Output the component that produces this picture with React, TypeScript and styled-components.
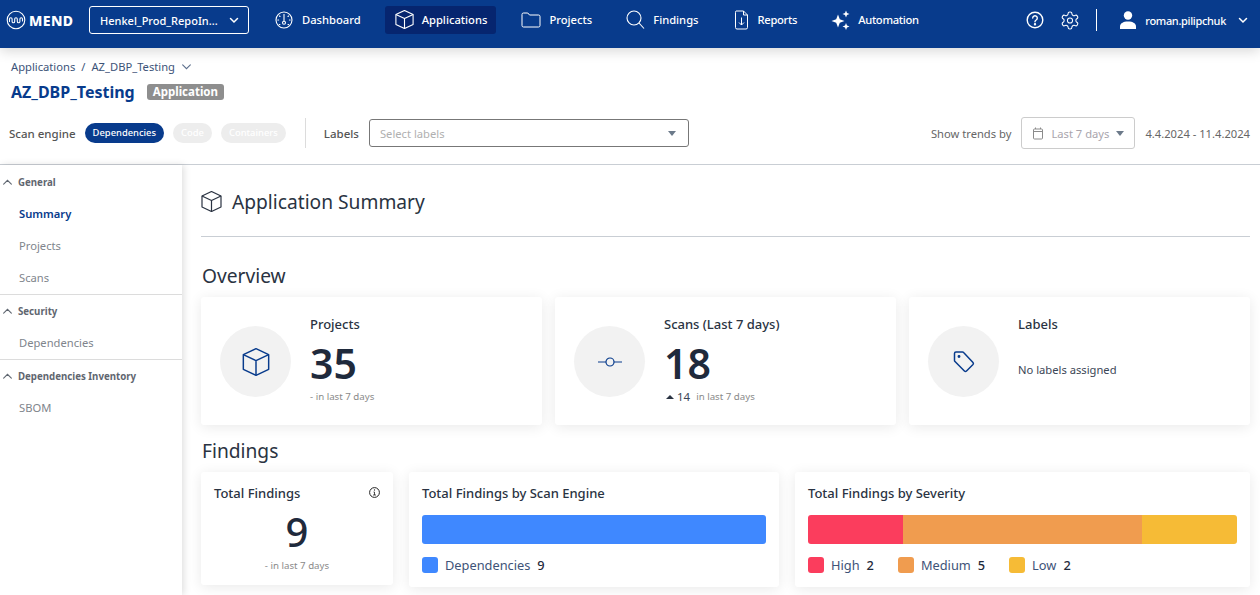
import React from "react";
import styled, { createGlobalStyle } from "styled-components";

const Global = createGlobalStyle`
  html, body { margin: 0; padding: 0; background: #fff; }
  body { font-family: "Noto Sans", "Open Sans", sans-serif; color: #1f2a3c; }
  * { box-sizing: border-box; }
`;

const Page = styled.div`
  width: 1260px;
  height: 595px;
  overflow: hidden;
  display: flex;
  flex-direction: column;
`;

const TopBar = styled.header`
  height: 48px;
  flex: none;
  background: #083b8c;
  display: flex;
  align-items: flex-start;
  padding: 6px 0 0 6px;
  box-shadow: 0 3px 12px rgba(0, 0, 0, 0.16);
  position: relative;
  z-index: 2;
  color: #fff;
`;

const Logo = styled.div`
  display: flex;
  align-items: center;
  gap: 3px;
  width: 83px;
  height: 28px;
  font-size: 14px;
  font-weight: 800;
  letter-spacing: 0.4px;
`;

const OrgSelect = styled.div`
  width: 160px;
  height: 28px;
  flex: none;
  border: 1px solid #fff;
  border-radius: 3px;
  display: flex;
  align-items: center;
  justify-content: space-between;
  padding: 0 9px 0 10px;
  font-size: 11px;
  font-weight: 500;
`;

const Nav = styled.nav`
  display: flex;
  align-items: center;
  margin-left: 16px;
  gap: 15px;
`;

const NavItem = styled.div<{ $active?: boolean }>`
  display: flex;
  align-items: center;
  height: 28px;
  gap: 8px;
  padding: 0 9px 0 10px;
  border-radius: 3px;
  font-size: 11.2px;
  font-weight: 500;
  white-space: nowrap;
  background: ${(p) => (p.$active ? "#06256f" : "transparent")};
  svg { margin-bottom: 1px; }
`;

const NavLabel = styled.span<{ $tight?: boolean }>`
  margin-bottom: 2px;
  letter-spacing: ${(p) => (p.$tight ? "-0.3px" : "0")};
`;

const TopRight = styled.div`
  margin-left: auto;
  display: flex;
  align-items: center;
  height: 28px;
  padding-right: 12px;
`;

const IconSlot = styled.span`
  display: flex;
  margin-right: 17px;
`;

const VDivider = styled.span`
  width: 1px;
  height: 22px;
  background: #fff;
  margin: 0 22px 0 0;
`;

const UserName = styled.span`
  font-size: 11px;
  font-weight: 500;
  letter-spacing: -0.33px;
  margin: 0 12px 0 8px;
`;

const PageHead = styled.section`
  flex: none;
  height: 117px;
  border-bottom: 1px solid #c9ced4;
  padding: 9px 10px 0 9px;
`;

const Crumbs = styled.div`
  display: flex;
  align-items: center;
  height: 18px;
  margin-left: 2px;
  font-size: 11.2px;
  color: #3c5378;
  gap: 6px;
`;

const TitleRow = styled.div`
  display: flex;
  align-items: center;
  gap: 12px;
  margin: 4px 0 0 2px;
  height: 26px;
`;

const Title = styled.h1`
  margin: 0;
  font-size: 16px;
  font-weight: 700;
  color: #083b8c;
`;

const Badge = styled.span`
  background: #8e8e8e;
  color: #fff;
  font-size: 11.5px;
  font-weight: 700;
  line-height: 16px;
  height: 16px;
  padding: 0 6px;
  border-radius: 3px;
`;

const FilterRow = styled.div`
  display: flex;
  align-items: center;
  margin-top: 13px;
  height: 30px;
`;

const FilterLabel = styled.span`
  font-size: 11.5px;
  font-weight: 500;
  color: #555;
`;

const Pill = styled.span<{ $on?: boolean }>`
  height: 20px;
  border-radius: 10px;
  padding: 0 8px;
  font-size: 9.4px;
  font-weight: 500;
  line-height: 20px;
  margin-right: 9px;
  background: ${(p) => (p.$on ? "#083b8c" : "#ededed")};
  color: #fff;
`;

const PillGroup = styled.div`
  display: flex;
  margin-left: 9px;
`;

const FilterDivider = styled.span`
  width: 1px;
  height: 30px;
  background: #dcdcdc;
  margin: 0 18px 0 10px;
`;

const LabelSelect = styled.div`
  width: 320px;
  height: 28px;
  margin-left: 10px;
  border: 1px solid #777;
  border-radius: 3px;
  display: flex;
  align-items: center;
  justify-content: space-between;
  padding: 0 12px 0 10px;
  font-size: 11.2px;
  color: #b0b0b0;
`;

const Caret = styled.span`
  width: 0;
  height: 0;
  border-left: 4px solid transparent;
  border-right: 4px solid transparent;
  border-top: 5px solid #6c7a8a;
`;

const Trends = styled.div`
  margin-left: auto;
  display: flex;
  align-items: center;
  font-size: 11.2px;
  color: #666;
`;

const DateSelect = styled.div`
  width: 114px;
  height: 32px;
  margin: 0 10px;
  border: 1px solid #ccc;
  border-radius: 3px;
  display: flex;
  align-items: center;
  gap: 7px;
  padding: 0 10px;
  color: #a9a5ad;
`;

const Body = styled.div`
  flex: 1;
  display: flex;
  min-height: 0;
`;

const Sidebar = styled.aside`
  width: 182px;
  flex: none;
  padding-top: 1px;
  box-shadow: 2px 0 7px rgba(0, 0, 0, 0.13);
  position: relative;
  background: #fff;
`;

const SideGroup = styled.div`
  border-bottom: 1px solid #dcdcdc;
  &:last-child { border-bottom: 0; }
`;

const SideHead = styled.div`
  height: 32px;
  display: flex;
  align-items: center;
  padding-left: 2px;
  gap: 5px;
  font-size: 9.7px;
  font-weight: 700;
  color: #5f6670;
`;

const SideItem = styled.div<{ $active?: boolean }>`
  height: 32px;
  line-height: 32px;
  padding-left: 19px;
  font-size: 11.2px;
  font-weight: ${(p) => (p.$active ? 600 : 400)};
  color: ${(p) => (p.$active ? "#083b8c" : "#80858c")};
`;

const Main = styled.main`
  flex: 1;
  padding: 0 10px 0 19px;
  min-width: 0;
`;

const SummaryHead = styled.div`
  height: 72px;
  border-bottom: 1px solid #c9ced4;
  display: flex;
  align-items: center;
  gap: 10px;
  font-size: 19.2px;
  color: #2a3342;
  padding-top: 2px;
`;

const Section = styled.h2<{ $top: number }>`
  margin: ${(p) => p.$top}px 0 0 1px;
  font-size: 19.2px;
  font-weight: 400;
  line-height: 26px;
  color: #2a3342;
`;

const CardRow = styled.div`
  display: flex;
  gap: 13px;
  margin-top: 8px;
`;

const Card = styled.div<{ $w: number; $h: number }>`
  width: ${(p) => p.$w}px;
  height: ${(p) => p.$h}px;
  flex: none;
  background: #fff;
  border-radius: 3px;
  box-shadow: 0 2px 14px rgba(0, 0, 0, 0.09);
  position: relative;
`;

const StatCard = styled(Card)`
  display: flex;
  padding: 29px 0 0 19px;
`;

const Circle = styled.div`
  width: 71px;
  height: 71px;
  flex: none;
  border-radius: 50%;
  background: #f2f2f2;
  display: flex;
  align-items: center;
  justify-content: center;
`;

const StatBody = styled.div`
  margin: -29px 0 0 19px;
  padding-top: 19px;
`;

const StatTitle = styled.div`
  font-size: 13px;
  font-weight: 500;
  line-height: 17px;
  color: #2a3342;
`;

const BigNum = styled.div`
  font-size: 41px;
  font-weight: 600;
  line-height: 48px;
  margin-top: 6px;
  color: #1f2a3c;
`;

const Trend = styled.div`
  font-size: 9.7px;
  color: #8a8a8a;
  margin-top: 3px;
  display: flex;
  align-items: center;
  line-height: 14px;
`;

const TrendValue = styled.span`
  font-size: 11.5px;
  color: #3b4656;
  margin: 0 6px 0 3px;
`;

const Up = styled.span`
  width: 0;
  height: 0;
  margin-left: 2px;
  border-left: 4px solid transparent;
  border-right: 4px solid transparent;
  border-bottom: 4px solid #2a3342;
`;

const NoLabels = styled.div`
  font-size: 11.2px;
  margin-top: 29px;
  color: #3b4656;
`;

const FindingsRow = styled.div`
  display: flex;
  align-items: flex-start;
  gap: 16px;
  margin-top: 8px;
`;

const TotalCard = styled(Card)`
  padding: 13px 13px 0;
  text-align: center;
`;

const CardHeading = styled.div`
  font-size: 13px;
  font-weight: 500;
  line-height: 17px;
  color: #2a3342;
  text-align: left;
`;

const InfoIcon = styled.span`
  position: absolute;
  top: 15px;
  right: 13px;
  display: flex;
`;

const Nine = styled.div`
  font-size: 40px;
  font-weight: 500;
  line-height: 46px;
  margin-top: 7px;
`;

const TotalSub = styled.div`
  font-size: 9.7px;
  line-height: 14px;
  margin-top: 4px;
  color: #8a8a8a;
`;

const ChartCard = styled(Card)`
  padding: 13px 13px 0;
`;

const Stack = styled.div`
  display: flex;
  height: 29px;
  border-radius: 3px;
  overflow: hidden;
  margin-top: 13px;
`;

const Seg = styled.div<{ $c: string; $w: number }>`
  width: ${(p) => p.$w}px;
  flex: none;
  background: ${(p) => p.$c};
`;

const Legend = styled.div`
  display: flex;
  margin-top: 13px;
  gap: 24px;
`;

const LegendItem = styled.div`
  display: flex;
  align-items: center;
  font-size: 12.8px;
  line-height: 16px;
  color: #3e5378;
`;

const Swatch = styled.span<{ $c: string }>`
  width: 16px;
  height: 16px;
  border-radius: 3px;
  background: ${(p) => p.$c};
  margin-right: 7px;
`;

const Count = styled.b`
  font-weight: 500;
  color: #1f2a3c;
  margin-left: 7px;
`;

type IconProps = { s?: number; c?: string; w?: number };

const Cube = ({ s = 20, c = "#fff", w = 1.3 }: IconProps) => (
  <svg width={s} height={s} viewBox="1.5 1.5 21 21" fill="none" stroke={c} strokeWidth={w} strokeLinejoin="round">
    <path d="M12 2 21.5 6.5v11L12 22 2.5 17.500v-11z" />
    <path d="M2.500 6.500 12 11l9.500-4.500M12 11v11" />
  </svg>
);

const Chevron = ({ s = 10, c = "#fff", up = false, w = 1.5 }: IconProps & { up?: boolean }) => (
  <svg width={s} height={s} viewBox="0 0 10 10" fill="none" stroke={c} strokeWidth={w} strokeLinecap="round">
    <path d={up ? "M1.500 6.500 5 3l3.500 3.500" : "M1.500 3.500 5 7l3.500-3.500"} />
  </svg>
);

const Dashboard = () => (
  <svg width="19" height="18" viewBox="0 0 19 18" fill="none" stroke="#fff" strokeWidth="1.1">
    <circle cx="9" cy="9" r="8" />
    <path d="M9 3v7" />
    <circle cx="9" cy="11.800" r="1.500" />
    <path d="M4.500 5 5 5.500M13.500 5l-.5.5M2.800 9h.8M14.400 9h.8M4.300 13.500h.6M13 13.500h.6" strokeLinecap="round" />
  </svg>
);

const Folder = () => (
  <svg width="20" height="18" viewBox="0 0 20 18" fill="none" stroke="#fff" strokeWidth="1">
    <path d="M1 3.500A1.500 1.500 0 0 1 2.500 2h4.300l1.700 2h9A1.500 1.500 0 0 1 19 5.500v9a1.500 1.500 0 0 1-1.500 1.500h-15A1.500 1.500 0 0 1 1 14.500z" />
  </svg>
);

const Search = () => (
  <svg width="19" height="19" viewBox="0 0 19 19" fill="none" stroke="#fff" strokeWidth="1.1">
    <circle cx="8" cy="8" r="7" />
    <path d="m13 13 5 5.500" />
  </svg>
);

const Report = () => (
  <svg width="17" height="20" viewBox="0 0 17 20" fill="none" stroke="#fff" strokeWidth="1">
    <path d="M3 1h7.500L14.500 5v12.500a1.500 1.500 0 0 1-1.500 1.500H4a1.500 1.500 0 0 1-1.500-1.500v-15A1.500 1.500 0 0 1 3 1zM10.500 1v4h4" />
    <path d="M8.500 7.500v7.500M6 12.500 8.500 15l2.500-2.500" />
  </svg>
);

const Sparkles = () => (
  <svg width="19" height="20" viewBox="0 0 19 20" fill="#fff">
    <path d="M7 4.500 8.800 9.200 13.500 11 8.800 12.800 7 17.500 5.200 12.800 .5 11 5.200 9.200z" />
    <path d="M15 .5 16 3 18.500 4 16 5 15 7.500 14 5 11.500 4 14 3zM15 13 16 15.500 18.500 16.500 16 17.500 15 20 14 17.500 11.500 16.500 14 15.500z" />
  </svg>
);

const Help = () => (
  <svg width="18" height="18" viewBox="0 0 18 18" fill="none" stroke="#fff" strokeWidth="1.4">
    <circle cx="9" cy="9" r="7.800" />
    <path d="M6.700 7a2.300 2.300 0 1 1 3.500 2c-.8.500-1.200 1-1.200 1.800" strokeLinecap="round" />
    <circle cx="9" cy="13.200" r=".5" fill="#fff" />
  </svg>
);

const Gear = () => (
  <svg width="18" height="19" viewBox="1.500 1.500 21 21" fill="none" stroke="#fff" strokeWidth="1.200" strokeLinecap="round" strokeLinejoin="round">
    <path d="M12.220 2h-.44a2 2 0 0 0-2 2v.18a2 2 0 0 1-1 1.730l-.43.250a2 2 0 0 1-2 0l-.15-.080a2 2 0 0 0-2.730.730l-.22.380a2 2 0 0 0 .73 2.730l.15.100a2 2 0 0 1 1 1.720v.510a2 2 0 0 1-1 1.740l-.15.090a2 2 0 0 0-.73 2.730l.22.380a2 2 0 0 0 2.730.730l.15-.080a2 2 0 0 1 2 0l.43.250a2 2 0 0 1 1 1.730V20a2 2 0 0 0 2 2h.44a2 2 0 0 0 2-2v-.18a2 2 0 0 1 1-1.730l.43-.250a2 2 0 0 1 2 0l.15.080a2 2 0 0 0 2.730-.730l.22-.390a2 2 0 0 0-.73-2.730l-.15-.080a2 2 0 0 1-1-1.740v-.500a2 2 0 0 1 1-1.740l.15-.090a2 2 0 0 0 .73-2.730l-.22-.380a2 2 0 0 0-2.730-.730l-.15.080a2 2 0 0 1-2 0l-.43-.250a2 2 0 0 1-1-1.730V4a2 2 0 0 0-2-2z" />
    <circle cx="12" cy="12" r="3" />
  </svg>
);

const User = () => (
  <svg width="18" height="20" viewBox="0 0 18 20" fill="#fff">
    <circle cx="9" cy="5.500" r="4.200" />
    <path d="M1 19v-2.500C1 13.500 4 11.500 9 11.500s8 2 8 5V19z" />
  </svg>
);

const MendMark = () => (
  <svg width="20" height="20" viewBox="0 0 20 20" fill="none" stroke="#fff" strokeWidth="1.100" strokeLinecap="round">
    <circle cx="10" cy="10" r="8.800" />
    <path d="M3.500 11.500V9a1.300 1.300 0 0 1 2.600 0v2.500a1.300 1.300 0 0 0 2.600 0V9a1.300 1.300 0 0 1 2.600 0v2.500a1.300 1.300 0 0 0 2.600 0V9a1.300 1.300 0 0 1 2.600 0v2" />
  </svg>
);

const Calendar = () => (
  <svg width="12" height="13" viewBox="0 0 12 13" fill="none" stroke="#8b8b8b" strokeWidth="1">
    <rect x="1.500" y="2" width="9" height="10" rx="1" />
    <path d="M1.500 4.500h9M3.500 .5V2M8.500 .5V2" />
  </svg>
);

const Commit = () => (
  <svg width="26" height="12" viewBox="0 0 26 12" fill="none" stroke="#083b8c" strokeWidth="1.200">
    <circle cx="13" cy="6" r="4" />
    <path d="M1 6h8M17 6h8" />
  </svg>
);

const Tag = () => (
  <svg width="24" height="24" viewBox="0 0 24 24" fill="none" stroke="#083b8c" strokeWidth="1.500" strokeLinejoin="round">
    <path d="M2.500 3.500a1.500 1.500 0 0 1 1.500-1.500h6.500a1.500 1.500 0 0 1 1.100.5l9.400 10a1.500 1.500 0 0 1 0 2l-6.500 6.500a1.500 1.500 0 0 1-2.100 0L3 11.500a1.500 1.500 0 0 1-.5-1.100z" />
    <circle cx="7" cy="6.500" r=".7" fill="#083b8c" />
  </svg>
);

const Info = () => (
  <svg width="11" height="11" viewBox="0 0 11 11" fill="none" stroke="#222" strokeWidth="1">
    <circle cx="5.500" cy="5.500" r="4.900" />
    <path d="M4.500 5h1v3M4 8h3" strokeWidth=".8" />
    <circle cx="5.500" cy="3" r=".3" />
  </svg>
);

const navItems: { label: string; icon: React.ReactNode; active?: boolean; tight?: boolean }[] = [
  { label: "Dashboard", icon: <Dashboard /> },
  { label: "Applications", icon: <Cube s={19} w={1.2} />, active: true },
  { label: "Projects", icon: <Folder /> },
  { label: "Findings", icon: <Search /> },
  { label: "Reports", icon: <Report />, tight: true },
  { label: "Automation", icon: <Sparkles />, tight: true },
];

const sideGroups = [
  { name: "General", items: ["Summary", "Projects", "Scans"] },
  { name: "Security", items: ["Dependencies"] },
  { name: "Dependencies Inventory", items: ["SBOM"] },
];

export default function App() {
  return (
    <Page>
      <Global />
      <TopBar>
        <Logo>
          <MendMark />
          MEND
        </Logo>
        <OrgSelect>
          Henkel_Prod_RepoIn...
          <Chevron />
        </OrgSelect>
        <Nav>
          {navItems.map((n) => (
            <NavItem key={n.label} $active={n.active}>
              {n.icon}
              <NavLabel $tight={n.tight}>{n.label}</NavLabel>
            </NavItem>
          ))}
        </Nav>
        <TopRight>
          <IconSlot><Help /></IconSlot>
          <IconSlot><Gear /></IconSlot>
          <VDivider />
          <User />
          <UserName>roman.pilipchuk</UserName>
          <Chevron />
        </TopRight>
      </TopBar>
      <PageHead>
        <Crumbs>
          <span>Applications</span>
          <span>/</span>
          <span>AZ_DBP_Testing</span>
          <Chevron c="#5c6f8c" s={11} w={1} />
        </Crumbs>
        <TitleRow>
          <Title>AZ_DBP_Testing</Title>
          <Badge>Application</Badge>
        </TitleRow>
        <FilterRow>
          <FilterLabel>Scan engine</FilterLabel>
          <PillGroup>
            <Pill $on>Dependencies</Pill>
            <Pill>Code</Pill>
            <Pill>Containers</Pill>
          </PillGroup>
          <FilterDivider />
          <FilterLabel>Labels</FilterLabel>
          <LabelSelect>
            Select labels
            <Caret />
          </LabelSelect>
          <Trends>
            Show trends by
            <DateSelect>
              <Calendar />
              Last 7 days
              <Caret />
            </DateSelect>
            4.4.2024 - 11.4.2024
          </Trends>
        </FilterRow>
      </PageHead>
      <Body>
        <Sidebar>
          {sideGroups.map((g) => (
            <SideGroup key={g.name}>
              <SideHead>
                <Chevron up c="#5f6670" s={11} w={1} />
                {g.name}
              </SideHead>
              {g.items.map((i) => (
                <SideItem key={i} $active={i === "Summary"}>{i}</SideItem>
              ))}
            </SideGroup>
          ))}
        </Sidebar>
        <Main>
          <SummaryHead>
            <Cube s={21} c="#2a3342" w={1.2} />
            Application Summary
          </SummaryHead>
          <Section $top={26}>Overview</Section>
          <CardRow>
            <StatCard $w={341} $h={128}>
              <Circle><Cube s={28} c="#083b8c" w={1.1} /></Circle>
              <StatBody>
                <StatTitle>Projects</StatTitle>
                <BigNum>35</BigNum>
                <Trend>- in last 7 days</Trend>
              </StatBody>
            </StatCard>
            <StatCard $w={341} $h={128}>
              <Circle><Commit /></Circle>
              <StatBody>
                <StatTitle>Scans (Last 7 days)</StatTitle>
                <BigNum>18</BigNum>
                <Trend><Up /><TrendValue>14</TrendValue>in last 7 days</Trend>
              </StatBody>
            </StatCard>
            <StatCard $w={341} $h={128}>
              <Circle><Tag /></Circle>
              <StatBody>
                <StatTitle>Labels</StatTitle>
                <NoLabels>No labels assigned</NoLabels>
              </StatBody>
            </StatCard>
          </CardRow>
          <Section $top={13}>Findings</Section>
          <FindingsRow>
            <TotalCard $w={192} $h={113}>
              <CardHeading>Total Findings</CardHeading>
              <InfoIcon><Info /></InfoIcon>
              <Nine>9</Nine>
              <TotalSub>- in last 7 days</TotalSub>
            </TotalCard>
            <ChartCard $w={370} $h={115}>
              <CardHeading>Total Findings by Scan Engine</CardHeading>
              <Stack><Seg $c="#3f88ff" $w={344} /></Stack>
              <Legend>
                <LegendItem><Swatch $c="#3f88ff" />Dependencies<Count>9</Count></LegendItem>
              </Legend>
            </ChartCard>
            <ChartCard $w={455} $h={115}>
              <CardHeading>Total Findings by Severity</CardHeading>
              <Stack>
                <Seg $c="#fb3d5d" $w={95} />
                <Seg $c="#f09c4f" $w={239} />
                <Seg $c="#f6bb36" $w={95} />
              </Stack>
              <Legend>
                <LegendItem><Swatch $c="#fb3d5d" />High<Count>2</Count></LegendItem>
                <LegendItem><Swatch $c="#f09c4f" />Medium<Count>5</Count></LegendItem>
                <LegendItem><Swatch $c="#f6bb36" />Low<Count>2</Count></LegendItem>
              </Legend>
            </ChartCard>
          </FindingsRow>
        </Main>
      </Body>
    </Page>
  );
}
